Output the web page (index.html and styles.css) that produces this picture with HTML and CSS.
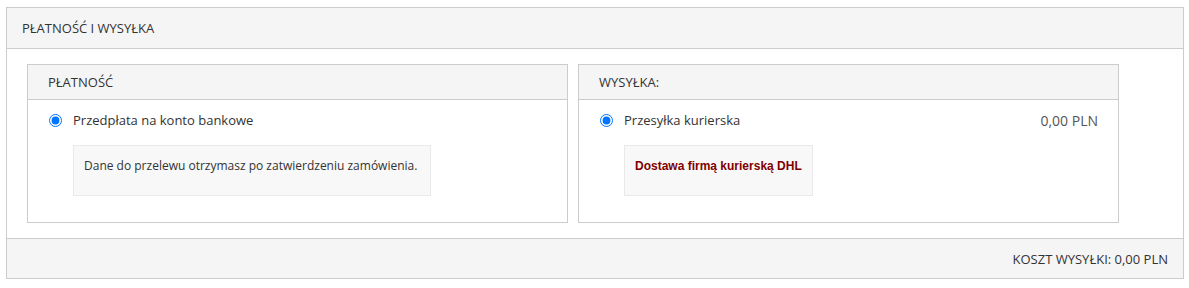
FILE: index.html
```html
<!DOCTYPE html>
<html lang="pl">
<head>
    <meta charset="UTF-8">
    <meta name="viewport" content="width=device-width, initial-scale=1.0">
    <title>Płatność i wysyłka</title>
    <link rel="stylesheet" href="styles.css">
</head>
<body>
    <div class="panel">
        <div class="panel-heading">PŁATNOŚĆ I WYSYŁKA</div>

        <div class="panel-body">
            <!-- Płatność -->
            <div class="box">
                <div class="box-heading">PŁATNOŚĆ</div>
                <div class="box-body">
                    <label class="option">
                        <input type="radio" name="payment" checked>
                        <span class="option-name">Przedpłata na konto bankowe</span>
                    </label>
                    <div class="note">Dane do przelewu otrzymasz po zatwierdzeniu zamówienia.</div>
                </div>
            </div>

            <!-- Wysyłka -->
            <div class="box">
                <div class="box-heading">WYSYŁKA:</div>
                <div class="box-body">
                    <label class="option">
                        <input type="radio" name="shipping" checked>
                        <span class="option-name">Przesyłka kurierska</span>
                        <span class="price">0,00 PLN</span>
                    </label>
                    <div class="note note-red">Dostawa firmą kurierską DHL</div>
                </div>
            </div>
        </div>

        <div class="panel-footer">KOSZT WYSYŁKI: 0,00 PLN</div>
    </div>
</body>
</html>
```

FILE: styles.css
```css
body {
    font-family: "Open Sans", Arial, sans-serif;
    color: #333;
    background: #fff;
    margin: 0;
    padding: 7px 5px 0 6px;
}
.panel {
    border: 1px solid #ccc;
}
.panel-heading {
    height: 40px;
    display: flex;
    align-items: center;
    padding: 0 15px;
    background: #f5f5f5;
    border-bottom: 1px solid #ccc;
    font-size: 13px;
}
.panel-body {
    display: grid;
    grid-template-columns: 541px 541px;
    gap: 10px;
    padding: 15px 0 15px 20px;
}
.box {
    border: 1px solid #ccc;
}
.box-heading {
    height: 34px;
    display: flex;
    align-items: center;
    padding: 0 20px;
    background: #f5f5f5;
    border-bottom: 1px solid #ccc;
    font-size: 13px;
}
.box-body {
    padding: 10px 20px 26px 21px;
}
.option {
    display: flex;
    align-items: center;
    height: 20px;
    font-size: 13px;
}
.option input {
    margin: 0 11px 0 0;
    width: 13px;
    height: 13px;
}
.option-name {
    flex: 1;
}
.price {
    font-size: 14px;
    color: #555;
}
.note {
    display: inline-block;
    margin: 15px 0 0 24px;
    padding: 11px 13px 20px 10px;
    line-height: 18px;
    background: #f8f8f8;
    border: 1px solid #e9e9e9;
    font-size: 12px;
}
.note-red {
    font-family: "Liberation Sans", Arial, sans-serif;
    font-weight: bold;
    color: #800000;
    padding-right: 10px;
}
.panel-footer {
    height: 39px;
    display: flex;
    align-items: center;
    justify-content: flex-end;
    padding: 0 15px;
    background: #f5f5f5;
    border-top: 1px solid #ccc;
    font-size: 13px;
}
```
